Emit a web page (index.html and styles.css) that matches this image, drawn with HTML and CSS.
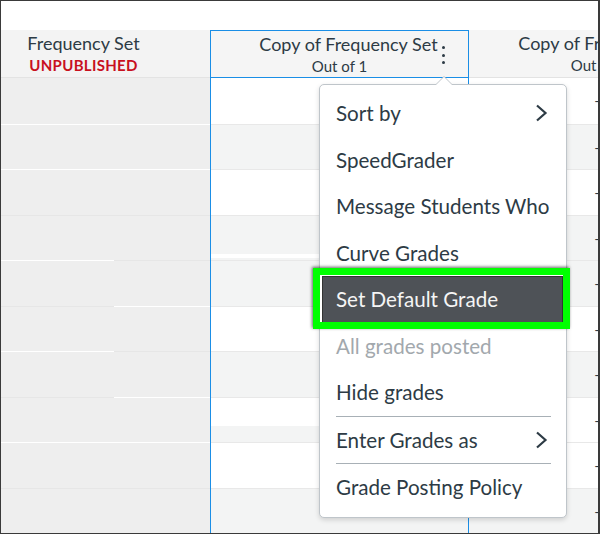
FILE: index.html
```html
<!DOCTYPE html>
<html lang="en">
<head>
    <meta charset="UTF-8">
    <title>Gradebook - column menu</title>
    <link rel="stylesheet" href="styles.css">
</head>
<body>
<div class="frame">
    <div class="grid">
        <!-- левая колонка -->
        <div class="col col-left">
            <div class="head">
                <div class="title">Frequency Set</div>
                <div class="unpub">UNPUBLISHED</div>
            </div>
            <div class="body-left">
                <div class="sub sub-a">
                    <div class="lc"></div>
                    <div class="lc w"></div>
                    <div class="lc w"></div>
                    <div class="lc"></div>
                    <div class="lc w"></div>
                    <div class="lc"></div>
                    <div class="lc w"></div>
                    <div class="lc"></div>
                    <div class="lc w"></div>
                    <div class="lc"></div>
                </div>
                <div class="sub sub-b">
                    <div class="lc"></div>
                    <div class="lc w"></div>
                    <div class="lc w"></div>
                    <div class="lc"></div>
                    <div class="lc"></div>
                    <div class="lc w"></div>
                    <div class="lc"></div>
                    <div class="lc w"></div>
                    <div class="lc w"></div>
                    <div class="lc"></div>
                </div>
            </div>
        </div>

        <!-- выбранная колонка -->
        <div class="col col-sel">
            <div class="head">
                <div class="title">Copy of Frequency Set</div>
                <div class="sub-title">Out of 1</div>
                <span class="kebab"><i></i><i></i><i></i></span>
            </div>
            <div class="cell"></div>
            <div class="cell alt"></div>
            <div class="cell"></div>
            <div class="cell alt strip"></div>
            <div class="cell alt"></div>
            <div class="cell"></div>
            <div class="cell alt"></div>
            <div class="cell half"></div>
            <div class="cell"></div>
            <div class="cell alt"></div>
        </div>

        <!-- следующая колонка -->
        <div class="col col-next">
            <div class="head">
                <div class="title">Copy of Frequency Set</div>
                <div class="sub-title">Out of 1</div>
            </div>
            <div class="cell">–</div>
            <div class="cell alt">–</div>
            <div class="cell">–</div>
            <div class="cell alt">–</div>
            <div class="cell alt">–</div>
            <div class="cell">–</div>
            <div class="cell alt">–</div>
            <div class="cell">–</div>
            <div class="cell">–</div>
            <div class="cell alt">–</div>
        </div>
    </div>

    <!-- выпадающее меню колонки -->
    <div class="menu">
        <div class="item">Sort by <span class="chev"><svg width="13" height="18" viewBox="0 0 13 18"><path d="M2 1.5 L10.5 9 L2 16.5" fill="none" stroke="#2d3b45" stroke-width="2.2"/></svg></span></div>
        <div class="item">SpeedGrader</div>
        <div class="item">Message Students Who</div>
        <div class="item">Curve Grades</div>
        <div class="item active"><span class="txt">Set Default Grade</span></div>
        <div class="item disabled">All grades posted</div>
        <div class="item">Hide grades</div>
        <div class="sep"></div>
        <div class="item">Enter Grades as <span class="chev"><svg width="13" height="18" viewBox="0 0 13 18"><path d="M2 1.5 L10.5 9 L2 16.5" fill="none" stroke="#2d3b45" stroke-width="2.2"/></svg></span></div>
        <div class="sep"></div>
        <div class="item">Grade Posting Policy</div>
    </div>
</div>
</body>
</html>
```

FILE: styles.css
```css
body {
    margin: 0;
    font-family: Lato, "Open Sans", sans-serif;
    color: #2d3b45;
    background: #ffffff;
}
.frame {
    position: relative;
    width: 600px;
    height: 534px;
    box-sizing: border-box;
    border: 1px solid #3a3a3a;
    border-right-width: 2px;
    padding-top: 29px; /* белая полоса сверху */
    overflow: hidden;
    background: #ffffff;
}
.grid {
    display: flex;
    width: 800px;
}
.col {
    flex: none;
}
.head {
    position: relative;
    height: 48px;
    box-sizing: border-box;
    padding-top: 3px;
    background: #f5f5f5;
    border-bottom: 1px solid #e3e3e3;
    text-align: center;
    white-space: nowrap;
}
.title {
    font-size: 18px;
    line-height: 21px;
}
.unpub {
    font-size: 15px;
    line-height: 22px;
    font-weight: bold;
    color: #c8101e;
    letter-spacing: 0.3px;
}
.sub-title {
    font-size: 15px;
    line-height: 22px;
}

/* левая колонка */
.col-left {
    width: 209px;
}
.col-left .head {
    padding-right: 44px;
    background: #f3f3f3;
}
.body-left {
    display: flex;
}
.sub-a {
    width: 113px;
}
.sub-b {
    width: 96px;
}
.lc {
    height: 45.5px;
    box-sizing: border-box;
    background: #eeeeee;
    border-top: 1px solid #e6e6e6;
}
.lc:first-child {
    border-top: none;
}
.lc.w {
    border-top: 1px solid #ffffff;
}

/* выбранная колонка */
.col-sel {
    width: 259px;
    box-sizing: border-box;
    border-left: 1px solid #1a8ee6;
    border-right: 1px solid #1a8ee6;
}
.col-sel .head {
    border: 1px solid #1a8ee6;
    margin: 0 -1px;
    background: #f5f5f5;
}
.col-sel .title,
.col-next .title {
    padding-left: 18px;
}
.kebab {
    position: absolute;
    left: 231px;
    top: 15px;
    display: flex;
    flex-direction: column;
    gap: 4.5px;
}
.kebab i {
    display: block;
    width: 3px;
    height: 3px;
    border-radius: 50%;
    background: #2d3b45;
}
.cell {
    height: 45.5px;
    box-sizing: border-box;
    background: #ffffff;
    border-top: 1px solid #e8e8e8;
}
.cell:nth-child(2) {
    border-top: none;
}
.cell.alt {
    background: #f3f4f4;
}
.cell.strip {
    background: linear-gradient(#f3f4f4 0, #f3f4f4 38px, #ffffff 38px, #ffffff 42px, #f3f4f4 42px);
}
.cell.half {
    background: linear-gradient(#ffffff 0, #ffffff 28px, #f3f4f4 28px);
}

/* следующая колонка */
.col-next {
    width: 259px;
}
.col-next .cell {
    font-size: 16px;
    line-height: 44px;
    text-align: center;
    color: #2d3b45;
}

/* меню */
.menu {
    position: absolute;
    left: 318px;
    top: 83px;
    width: 248px;
    height: 434px;
    box-sizing: border-box;
    padding: 5px 0;
    background: #ffffff;
    border: 1px solid #bfc5ca;
    border-radius: 5px;
    box-shadow: 0 2px 5px rgba(0, 0, 0, 0.15);
}
.menu::before,
.menu::after {
    content: "";
    position: absolute;
    left: 115px;
    border: 9px solid transparent;
    border-top: none;
}
.menu::before {
    top: -9px;
    border-bottom: 9px solid #bfc5ca;
}
.menu::after {
    top: -8px;
    border-bottom: 9px solid #ffffff;
}
.item {
    position: relative;
    display: flex;
    align-items: center;
    justify-content: space-between;
    height: 46.5px;
    padding: 0 18px 0 16px;
    font-size: 20.6px;
    color: #2d3b45;
    white-space: nowrap;
}
.chev {
    display: flex;
}
.item.disabled {
    color: #a2a8ad;
}
.item.active::before {
    content: "";
    position: absolute;
    left: 2px;
    right: 3px;
    top: 0;
    bottom: 0;
    background: #4e5257;
    border: 1px solid #333;
}
.item.active::after {
    content: "";
    position: absolute;
    left: -7px;
    right: -4px;
    top: -8px;
    bottom: -6px;
    border: 7px solid #00ff00;
    box-shadow: -1px -1px 3px rgba(0, 0, 0, 0.6);
}
.item.active .txt {
    position: relative;
    color: #f5f5f5;
}
.sep {
    height: 1px;
    margin: 0 15px 0 16px;
    background: #a8b0b6;
}
```
